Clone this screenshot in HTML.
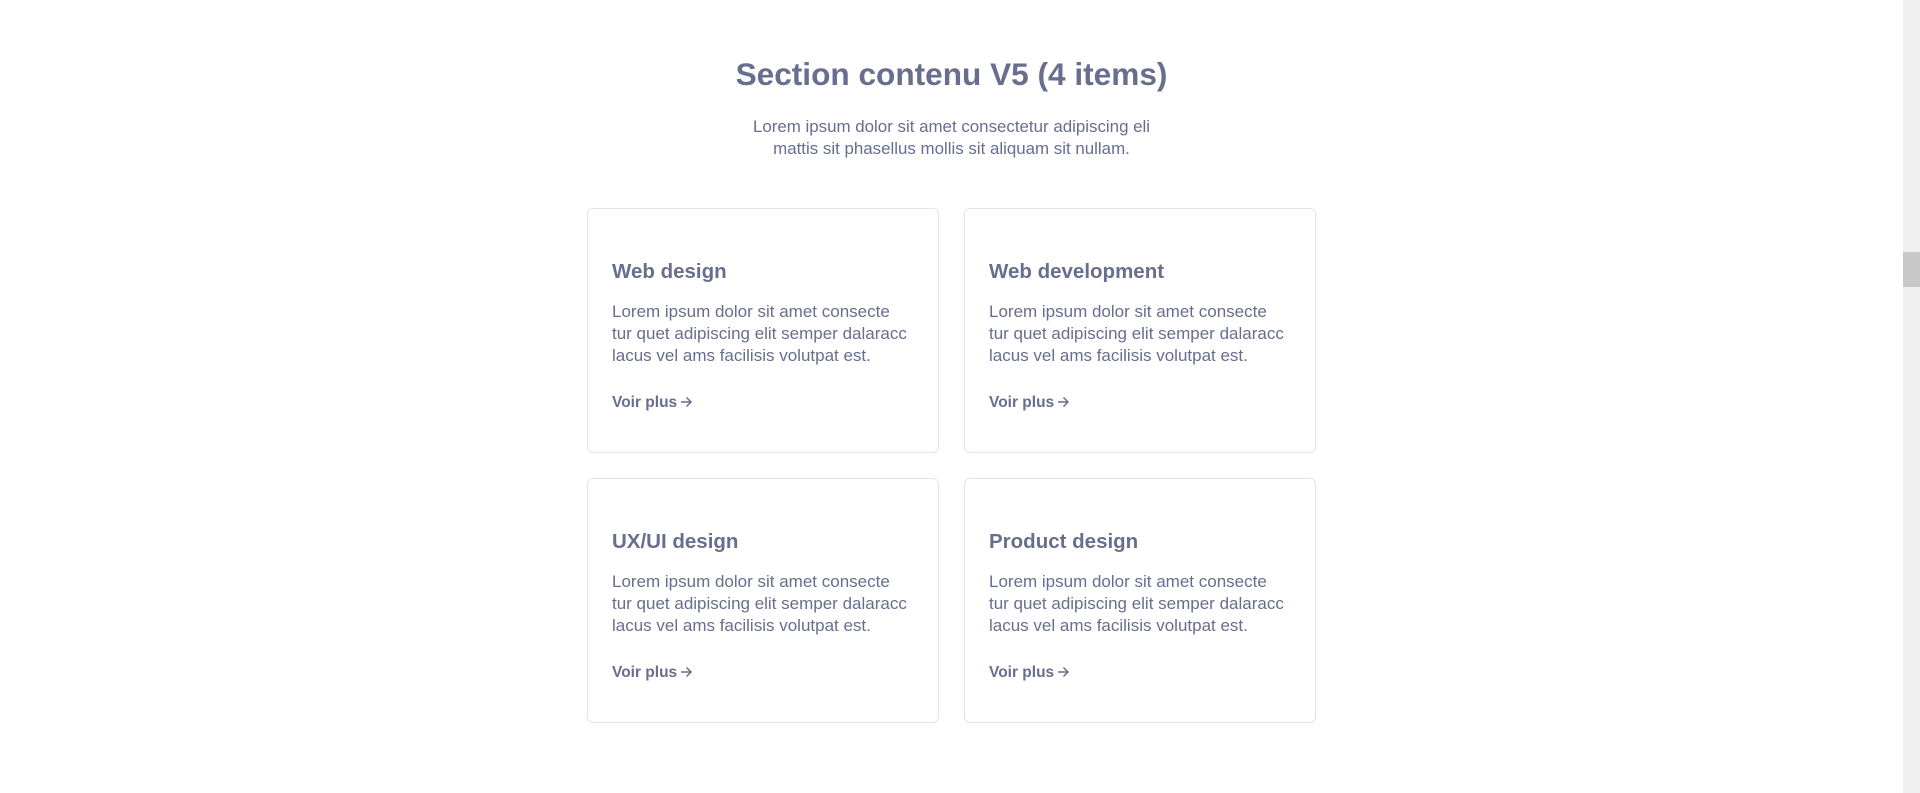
<!DOCTYPE html>
<html><head><meta charset="utf-8"><style>
html,body{margin:0;padding:0;}
body{width:1920px;height:793px;background:#fff;font-family:"Liberation Sans",sans-serif;color:#676e8e;position:relative;overflow:hidden;}
h1{position:absolute;top:52px;left:0;width:1903px;text-align:center;margin:0;font-size:31.6px;font-weight:700;line-height:44px;}
.sub{position:absolute;top:116px;left:0;width:1903px;text-align:center;font-size:16.9px;line-height:22px;}
.card{position:absolute;width:352px;height:245px;border:1px solid #e3e4ec;border-radius:6px;box-sizing:border-box;}
.t{position:absolute;left:25px;top:260px;font-size:20.5px;font-weight:700;white-space:nowrap;}
.b{position:absolute;left:25px;top:301px;font-size:17px;line-height:22px;white-space:nowrap;}
.v{position:absolute;left:25px;top:394px;font-size:15.5px;font-weight:700;white-space:nowrap;}
.v svg{vertical-align:-1px;margin-left:3px;}
.sb{position:absolute;right:0;top:0;width:17px;height:793px;background:#efefef;}
.th{position:absolute;right:0;top:252px;width:17px;height:35px;background:#c8c8c8;}
</style></head><body>
<h1>Section contenu V5 (4 items)</h1>
<div class="sub">Lorem ipsum dolor sit amet consectetur adipiscing eli<br>mattis sit phasellus mollis sit aliquam sit nullam.</div>

<div class="card" style="left:587px;top:208px"></div>
<div class="card" style="left:964px;top:208px"></div>
<div class="card" style="left:587px;top:478px"></div>
<div class="card" style="left:964px;top:478px"></div>

<div style="position:absolute;left:587px;top:0">
 <div class="t">Web design</div>
 <div class="b">Lorem ipsum dolor sit amet consecte<br>tur quet adipiscing elit semper dalaracc<br>lacus vel ams facilisis volutpat est.</div>
 <div class="v">Voir plus<svg width="13" height="12" viewBox="0 0 13 12"><path d="M1 6H11M6.5 1.5L11 6L6.5 10.5" fill="none" stroke="#676e8e" stroke-width="1.5"/></svg></div>
</div>
<div style="position:absolute;left:964px;top:0">
 <div class="t">Web development</div>
 <div class="b">Lorem ipsum dolor sit amet consecte<br>tur quet adipiscing elit semper dalaracc<br>lacus vel ams facilisis volutpat est.</div>
 <div class="v">Voir plus<svg width="13" height="12" viewBox="0 0 13 12"><path d="M1 6H11M6.5 1.5L11 6L6.5 10.5" fill="none" stroke="#676e8e" stroke-width="1.5"/></svg></div>
</div>
<div style="position:absolute;left:587px;top:270px">
 <div class="t">UX/UI design</div>
 <div class="b">Lorem ipsum dolor sit amet consecte<br>tur quet adipiscing elit semper dalaracc<br>lacus vel ams facilisis volutpat est.</div>
 <div class="v">Voir plus<svg width="13" height="12" viewBox="0 0 13 12"><path d="M1 6H11M6.5 1.5L11 6L6.5 10.5" fill="none" stroke="#676e8e" stroke-width="1.5"/></svg></div>
</div>
<div style="position:absolute;left:964px;top:270px">
 <div class="t">Product design</div>
 <div class="b">Lorem ipsum dolor sit amet consecte<br>tur quet adipiscing elit semper dalaracc<br>lacus vel ams facilisis volutpat est.</div>
 <div class="v">Voir plus<svg width="13" height="12" viewBox="0 0 13 12"><path d="M1 6H11M6.5 1.5L11 6L6.5 10.5" fill="none" stroke="#676e8e" stroke-width="1.5"/></svg></div>
</div>

<div class="sb"></div><div class="th"></div>
</body></html>
